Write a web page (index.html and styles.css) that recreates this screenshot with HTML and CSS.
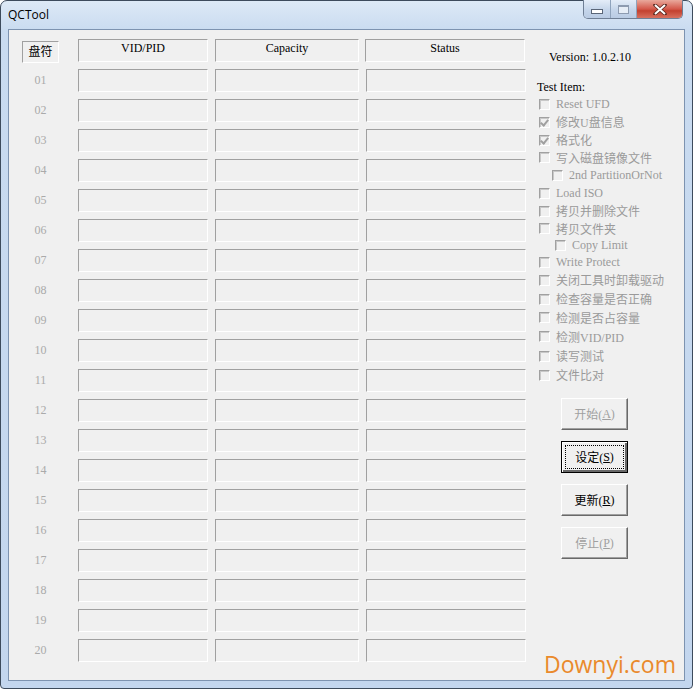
FILE: index.html
```html
<!DOCTYPE html>
<html lang="zh-CN">
<head>
  <meta charset="UTF-8">
  <title>QCTool</title>
  <link rel="stylesheet" href="styles.css">
</head>
<body>
  <div class="window">
    <div class="titlebar">
      <span class="title">QCTool</span>
      <div class="caption-buttons">
        <div class="cap-btn min"><span class="min-icon"></span></div>
        <div class="cap-btn max"><span class="max-icon"></span></div>
        <div class="cap-btn close">
          <svg width="14" height="11" viewBox="0 0 14 11">
            <path d="M2 1 L12 10 M12 1 L2 10" stroke="#5a2a22" stroke-width="3.6" stroke-linecap="round"/>
            <path d="M2 1 L12 10 M12 1 L2 10" stroke="#fff" stroke-width="2"/>
          </svg>
        </div>
      </div>
    </div>

    <div class="client">
      <div class="drive-grid" id="driveGrid">
        <div class="drive-head">盘符</div>
        <div class="box head">VID/PID</div>
        <div class="box head">Capacity</div>
        <div class="box head status">Status</div>
        <!-- rows built by script below -->
      </div>

      <div class="side">
        <div class="version">Version: 1.0.2.10</div>
        <div class="test-title">Test Item:</div>
        <ul class="items">
          <li><span class="chk"></span>Reset UFD</li>
          <li><span class="chk on"></span>修改U盘信息</li>
          <li><span class="chk on"></span>格式化</li>
          <li class="h17"><span class="chk"></span>写入磁盘镜像文件</li>
          <li class="h19 sub"><span class="chk"></span>2nd PartitionOrNot</li>
          <li class="h17"><span class="chk"></span>Load ISO</li>
          <li><span class="chk"></span>拷贝并删除文件</li>
          <li class="h17"><span class="chk"></span>拷贝文件夹</li>
          <li class="h17 sub2"><span class="chk"></span>Copy Limit</li>
          <li class="h16"><span class="chk"></span>Write Protect</li>
          <li class="h20"><span class="chk"></span>关闭工具时卸载驱动</li>
          <li><span class="chk"></span>检查容量是否正确</li>
          <li class="h19"><span class="chk"></span>检测是否占容量</li>
          <li class="h19"><span class="chk"></span>检测VID/PID</li>
          <li class="h20"><span class="chk"></span>读写测试</li>
          <li><span class="chk"></span>文件比对</li>
        </ul>

        <div class="buttons">
          <button class="btn" disabled>开始(<u>A</u>)</button>
          <button class="btn default"><span class="focus">设定(<u>S</u>)</span></button>
          <button class="btn">更新(<u>R</u>)</button>
          <button class="btn" disabled>停止(<u>P</u>)</button>
        </div>
      </div>

      <div class="watermark">Downyi.com</div>
    </div>
  </div>

  <script>
    const grid = document.getElementById('driveGrid');
    for (let i = 1; i <= 20; i++) {
      const num = String(i).padStart(2, '0');
      grid.insertAdjacentHTML('beforeend', `
        <div class="num">${num}</div>
        <div class="box"></div>
        <div class="box"></div>
        <div class="box status-cell"></div>
      `);
    }
  </script>
</body>
</html>
```

FILE: styles.css
```css
:root {
  --face: #f0f0f0;
  --shadow: #a0a0a0;
  --dark: #696969;
  --disabled: #a0a0a0;
  --frame: #c3d6ee;
}

* {
  box-sizing: border-box;
}

body {
  margin: 0;
  width: 693px;
  height: 689px;
  overflow: hidden;
  background: #fff;
  font-family: "Liberation Serif", "Noto Sans CJK SC", serif;
  font-size: 12px;
}

.window {
  width: 693px;
  height: 689px;
  border: 1px solid #3d4b5c;
  border-radius: 7px 7px 4px 4px;
  background: linear-gradient(to bottom, #dde9f6 0, #c9dbf0 30px, var(--frame) 100%);
  padding: 0 7px 7px 7px;
  display: flex;
  flex-direction: column;
}

/* title bar */
.titlebar {
  height: 28px;
  display: flex;
  justify-content: space-between;
  align-items: flex-start;
  margin: 0 2px 0 -7px;
}

.title {
  font-family: "Open Sans", "Noto Sans", sans-serif;
  font-size: 12px;
  line-height: 28px;
  padding-left: 7px;
  color: #000;
}

.caption-buttons {
  display: flex;
  height: 19px;
  border: 1px solid #6f7f95;
  border-top: none;
  border-radius: 0 0 5px 5px;
  overflow: hidden;
  margin-top: -1px;
}

.cap-btn {
  height: 100%;
  display: flex;
  align-items: center;
  justify-content: center;
  border-left: 1px solid #8fa3bc;
}

.cap-btn.min {
  width: 26px;
  border-left: none;
  background: linear-gradient(to bottom, #e4edf8, #c5d5ea 55%, #b9cbe3);
}

.cap-btn.max {
  width: 26px;
  background: linear-gradient(to bottom, #e4edf8, #c5d5ea 55%, #b9cbe3);
}

.cap-btn.close {
  width: 46px;
  background: linear-gradient(to bottom, #e9a99c, #d4584a 50%, #c3412f 60%, #d8705f);
}

.min-icon {
  width: 12px;
  height: 5px;
  margin-top: 5px;
  background: #fff;
  border: 1px solid #5a6678;
}

.max-icon {
  width: 11px;
  height: 9px;
  border: 1px solid #8d9bb0;
  border-top-width: 2px;
  background: #e6edf6;
}

/* client area */
.client {
  position: relative;
  flex: 1;
  background: var(--face);
  border: 1px solid #7d93b0;
  display: flex;
  gap: 11px;
  padding: 9px 0 0 13px;
}

.drive-grid {
  display: grid;
  grid-template-columns: 49px 130px 144px 160px;
  grid-auto-rows: 23px;
  column-gap: 7px;
  row-gap: 7px;
  align-content: start;
}

.drive-head {
  width: 37px;
  height: 22px;
  margin-top: 2px;
  border-top: 1px solid var(--shadow);
  border-left: 1px solid var(--shadow);
  border-right: 1px solid #fff;
  border-bottom: 1px solid #fff;
  text-align: center;
  line-height: 20px;
  color: #000;
}

.box {
  border-top: 1px solid var(--shadow);
  border-left: 1px solid var(--shadow);
  border-right: 1px solid #fff;
  border-bottom: 1px solid #fff;
}

.box.head {
  text-align: center;
  line-height: 15px;
  padding-top: 1px;
  color: #000;
}

.box.status {
  margin-left: -1px;
  margin-right: 1px;
}

.num {
  width: 37px;
  text-align: center;
  line-height: 23px;
  color: #aaa;
}

/* right side */
.side {
  padding-top: 11px;
}

.version {
  line-height: 15px;
  margin-left: 12px;
  color: #000;
}

.test-title {
  line-height: 15px;
  margin-top: 15px;
  color: #000;
}

.items {
  list-style: none;
  margin: 0;
  padding: 0 0 0 2px;
}

.items li {
  height: 18px;
  display: flex;
  align-items: center;
  color: #9a9a9a;
  white-space: nowrap;
}

.items li.h16 { height: 16px; }
.items li.h17 { height: 17px; }
.items li.h19 { height: 19px; }
.items li.h20 { height: 20px; }

.items li.sub { padding-left: 13px; }
.items li.sub2 { padding-left: 16px; }

.chk {
  position: relative;
  width: 11px;
  height: 11px;
  margin-right: 6px;
  flex-shrink: 0;
  border-top: 1px solid var(--shadow);
  border-left: 1px solid var(--shadow);
  border-right: 1px solid #fff;
  border-bottom: 1px solid #fff;
  box-shadow: inset 1px 1px 0 #c8c8c8;
  background: var(--face);
}

.chk.on::after {
  content: "";
  position: absolute;
  left: 2px;
  top: 0px;
  width: 3px;
  height: 6px;
  border-right: 2px solid #a0a0a0;
  border-bottom: 2px solid #a0a0a0;
  transform: rotate(40deg);
}

.buttons {
  display: flex;
  flex-direction: column;
  gap: 11px;
  margin: 14px 0 0 24px;
}

.btn {
  width: 67px;
  height: 32px;
  padding: 0;
  background: var(--face);
  border: 1px solid;
  border-color: #fff #696969 #696969 #fff;
  box-shadow: inset -1px -1px 0 #a0a0a0;
  font-family: "Liberation Serif", "Noto Sans CJK SC", serif;
  font-size: 12px;
  color: #000;
  display: flex;
  align-items: center;
  justify-content: center;
}

.btn u {
  text-decoration: underline;
}

.btn:disabled {
  color: #a0a0a0;
}

.btn.default {
  border: 1px solid #000;
  box-shadow: inset 1px 1px 0 #fff, inset -2px -2px 0 #696969;
  padding: 3px;
}

.btn.default .focus {
  width: 100%;
  height: 100%;
  display: flex;
  align-items: center;
  justify-content: center;
  border: 1px dotted #000;
}

.watermark {
  position: absolute;
  right: 8px;
  bottom: 0;
  font-family: "Open Sans", "Noto Sans", sans-serif;
  font-size: 23px;
  color: #ea8a2c;
}
```
